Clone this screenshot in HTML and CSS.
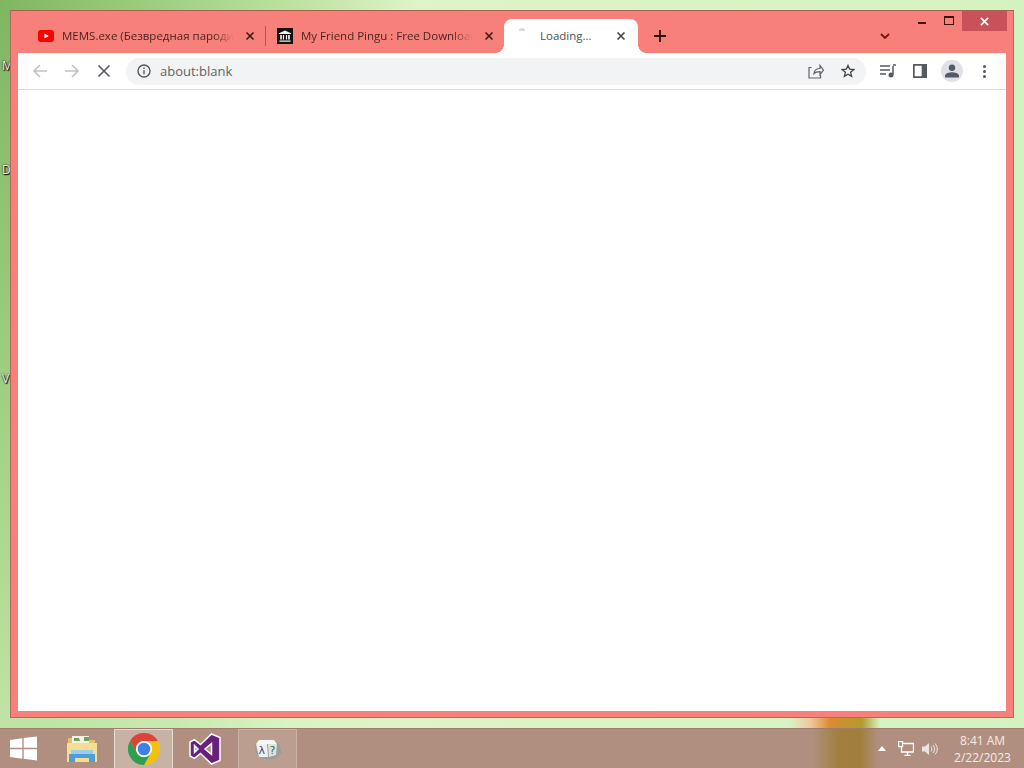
FILE: index.html
```html
<!DOCTYPE html>
<html lang="en">
<head>
    <meta charset="UTF-8">
    <meta name="viewport" content="width=device-width, initial-scale=1.0">
    <title>about:blank</title>
    <link rel="stylesheet" href="styles.css">
</head>
<body>
    <div class="desktop">
        <span class="desk-label label-m">M</span>
        <span class="desk-label label-d">D</span>
        <span class="desk-label label-v">V</span>

        <div class="window">
            <div class="caption">
                <div class="tab tab-first">
                    <svg class="favicon" viewBox="0 0 16 12"><rect width="16" height="12" rx="3" fill="#f00"/><path d="M6.4 3.4 10.8 6 6.4 8.6z" fill="#fff"/></svg>
                    <span class="tab-title">MEMS.exe (Безвредная пародия</span>
                    <svg class="tab-close" viewBox="0 0 10 10"><path d="M1.5 1.5l7 7M8.5 1.5l-7 7"/></svg>
                </div>
                <div class="tab-sep"></div>
                <div class="tab tab-second">
                    <svg class="favicon favicon-square" viewBox="0 0 16 16"><rect width="16" height="16" fill="#111"/><path d="M8 2.500 14 5.200v.9H2v-.9zM3.200 7h1.700v4.600H3.200zM5.900 7h1.200v4.600H5.900zM8.900 7h1.200v4.600H8.900zM11.100 7h1.700v4.600h-1.700zM2.400 12.400h11.200v1.300H2.400z" fill="#f4f4f4"/></svg>
                    <span class="tab-title">My Friend Pingu : Free Download</span>
                    <svg class="tab-close" viewBox="0 0 10 10"><path d="M1.5 1.5l7 7M8.5 1.5l-7 7"/></svg>
                </div>
                <div class="tab tab-active">
                    <span class="spinner"></span>
                    <span class="tab-title">Loading...</span>
                    <svg class="tab-close" viewBox="0 0 10 10"><path d="M1.5 1.5l7 7M8.5 1.5l-7 7"/></svg>
                </div>
                <svg class="new-tab" viewBox="0 0 12 12"><path d="M6 0v12M0 6h12"/></svg>
                <svg class="tab-search" viewBox="0 0 10 6"><path d="M1 1l4 4 4-4"/></svg>
                <div class="win-controls">
                    <div class="win-btn"><span class="win-min"></span></div>
                    <div class="win-btn"><span class="win-max"></span></div>
                    <div class="win-close"><svg viewBox="0 0 10 10"><path d="M1 1l8 8M9 1l-8 8"/></svg></div>
                </div>
            </div>

            <div class="toolbar">
                <svg class="nav-icon nav-off" viewBox="0 0 16 16"><path d="M15 8H2M8 2 2 8l6 6"/></svg>
                <svg class="nav-icon nav-off" viewBox="0 0 16 16"><path d="M1 8h13M8 2l6 6-6 6"/></svg>
                <svg class="nav-icon nav-stop" viewBox="0 0 16 16"><path d="M2.5 2.5l11 11M13.5 2.5l-11 11"/></svg>
                <div class="omnibox">
                    <svg class="info-icon" viewBox="0 0 14 14"><circle cx="7" cy="7" r="6"/><path d="M7 6.200v4M7 3.400v1.500"/></svg>
                    <span class="url">about:blank</span>
                    <svg class="omni-icon omni-share" viewBox="0 0 16 16"><path d="M3.500 4.500H1v10.500h11.500v-3M6 10.500c.4-3.300 3-5 6-5V2.500l3.500 4.700-3.500 4.300V8.600c-2.600 0-4.600.4-6 1.900z"/></svg>
                    <svg class="omni-icon omni-star" viewBox="0 0 16 16"><path d="M8 1.600l1.900 4.400 4.700.4-3.600 3.100 1.100 4.700L8 11.700l-4.100 2.500L5 9.500 1.400 6.400l4.700-.4z"/></svg>
                </div>
                <svg class="tool-icon tool-media" viewBox="0 0 16 14"><path d="M0 2h10M0 6h10M0 10h6" class="media-lines"/><path d="M13 2v8.500" class="media-lines"/><path d="M13 1h3" class="media-lines"/><circle cx="11" cy="11" r="2.500"/></svg>
                <svg class="tool-icon tool-panel" viewBox="0 0 14 14"><path fill-rule="evenodd" d="M0 0h14v14H0zM1.700 1.700v10.600h7V1.700z"/></svg>
                <div class="avatar">
                    <svg viewBox="0 0 14 14"><circle cx="7" cy="3.800" r="3.200"/><path d="M0 13.500v-1.700c0-2.400 4.500-3.500 7-3.500s7 1.100 7 3.500v1.700z"/></svg>
                </div>
                <div class="menu-dots"><span></span><span></span><span></span></div>
            </div>

            <div class="page"></div>
        </div>
    </div>

    <div class="taskbar">
        <svg class="start-icon" viewBox="0 0 28 25"><path d="M0 3.600 12.800 1.800v10H0zM14.200 1.600 28 0v11.800H14.200zM0 13.200h12.800v10L0 21.400zM14.200 13.200H28V25l-13.800-1.800z"/></svg>

        <div class="task task-explorer">
            <svg viewBox="0 0 32 32">
                <path d="M2 5h10l2 2h15v10H2z" fill="#e2c26a"/>
                <path d="M6 3h17v8H6z" fill="#f5f1e0"/>
                <path d="M8 5h5l1 3H8zM18 4h5v4h-5z" fill="#6f9f62"/>
                <path d="M1 10h30v19H1z" fill="#f5dd92"/>
                <path d="M3 21h26v8h-6v-4H9v4H3z" fill="#4c9fd8"/>
                <path d="M5 17h22v4H5z" fill="#9ccdec"/>
            </svg>
        </div>
        <div class="task task-active">
            <svg viewBox="0 0 32 32">
                <path d="M2.140 8A16 16 0 0 1 29.860 8H16A8 8 0 0 0 9.070 20z" fill="#db4437"/>
                <path d="M29.860 8A16 16 0 0 1 16 32L22.930 20A8 8 0 0 0 16 8z" fill="#f4c20d"/>
                <path d="M16 32A16 16 0 0 1 2.140 8L9.070 20A8 8 0 0 0 22.930 20z" fill="#2f9e4f"/>
                <circle cx="16" cy="16" r="8" fill="#fff"/>
                <circle cx="16" cy="16" r="6.300" fill="#3f7fe8"/>
            </svg>
        </div>
        <div class="task task-vs">
            <svg viewBox="0 0 32 32"><path d="M22.500 1 31 4.500v23L22.500 31 11.500 20.500l-6 4.800L1 23V9l4.500-2.300 6 4.800zM22.500 10.500 16 16l6.500 5.500zM5.500 12.500v7L9 16z" fill="#68217a" stroke="#fff" stroke-width="1.500"/></svg>
        </div>
        <div class="task task-open">
            <svg class="lambda-cube" viewBox="0 0 30 22">
                <path d="M2 6 9 2h12l5 4 3 9-7 6H8l-5-5z" fill="#9b9d9b"/>
                <path d="M3 6h11l1 13H6z" fill="#eef0f0"/>
                <path d="M15 6h9l-1 11-7 2z" fill="#dfe3df"/>
                <path d="M6 2h15l3 4H3z" fill="#f7f7f5"/>
                <text x="5.500" y="16" class="cube-lambda">λ</text>
                <text x="16.500" y="15.500" class="cube-q">?</text>
            </svg>
        </div>

        <div class="tray">
            <svg class="tray-up" viewBox="0 0 8 5"><path d="M0 5 4 0l4 5z"/></svg>
            <svg class="tray-net" viewBox="0 0 16 15"><path d="M5 2.500h10.500v8.500H3.500V6M9.500 11v3M6.500 14.500h6"/><rect x="0.500" y="0.500" width="4" height="5"/></svg>
            <svg class="tray-vol" viewBox="0 0 16 14"><path class="vol-cone" d="M0 4.500h3L7 1v12L3 9.500H0z"/><path d="M9 4.500c1 1.500 1 3.500 0 5M11 3c2 2.500 2 5.500 0 8M13 1.500c3 3.500 3 7.500 0 11"/></svg>
            <div class="clock">
                <span>8:41 AM</span>
                <span>2/22/2023</span>
            </div>
        </div>
    </div>
</body>
</html>
```

FILE: styles.css
```css
html, body {
    height: 100%;
}
body {
    margin: 0;
    font-family: "Open Sans", "Liberation Sans", sans-serif;
    display: flex;
    flex-direction: column;
    overflow: hidden;
    background: #c9ecb3;
}
svg {
    display: block;
    flex: none;
}

/* desktop */
.desktop {
    position: relative;
    flex: 1;
    background:
        linear-gradient(90deg, rgba(240,201,160,0) 790px, #f0c9a0 810px, #d98c30 830px, #b39a2e 862px, rgba(179,154,46,0) 880px) 0 100% / 100% 10px no-repeat,
        radial-gradient(ellipse 420px 1000px at 0 0, #7fb662 0, #a9d68b 50%, #c8e8ae 80%, rgba(200,232,174,0) 100%),
        linear-gradient(90deg, #d2efbc, #dff4c8 40%, #d4f2c0);
}
.desk-label {
    position: absolute;
    left: 2px;
    font-size: 12px;
    line-height: 14px;
    color: #eee;
    text-shadow: 0 0 2px #000, 1px 1px 1px #000;
}
.label-m { top: 59px; }
.label-d { top: 163px; }
.label-v { top: 372px; }

/* chrome window */
.window {
    position: absolute;
    left: 10px;
    top: 10px;
    width: 1004px;
    height: 708px;
    box-sizing: border-box;
    border: 1px solid #b3695c;
    border-top-color: #a8604f;
    background: #f8807a;
    padding: 0 7px 6px 7px;
    display: flex;
    flex-direction: column;
}
.caption {
    position: relative;
    height: 42px;
    flex: none;
    display: flex;
    align-items: flex-end;
}
.tab {
    height: 34px;
    box-sizing: border-box;
    padding-right: 8px;
    display: flex;
    align-items: center;
    gap: 8px;
    font-size: 11.5px;
    color: #4a2320;
}
.tab-first {
    width: 245px;
    padding-left: 20px;
}
.tab-second {
    width: 236px;
    padding-left: 11px;
}
.tab-sep {
    width: 1px;
    height: 20px;
    margin: 0 0 7px 2px;
    background: #a85d54;
}
.favicon {
    width: 16px;
    height: 12px;
}
.favicon-square {
    height: 16px;
}
.tab-title {
    flex: 1;
    min-width: 0;
    line-height: 16px;
    margin-bottom: 1px;
    white-space: nowrap;
    overflow: hidden;
    -webkit-mask-image: linear-gradient(90deg, #000 88%, transparent 100%);
    mask-image: linear-gradient(90deg, #000 88%, transparent 100%);
}
.tab-close {
    width: 10px;
    height: 10px;
    margin-left: 3px;
    fill: none;
    stroke: #3a1a18;
    stroke-width: 1.600;
}
.tab-active {
    position: relative;
    width: 134px;
    margin-left: 2px;
    padding: 0 12px 0 36px;
    background: #fff;
    border-radius: 8px 8px 0 0;
    color: #50504f;
}
.tab-active::before,
.tab-active::after {
    content: "";
    position: absolute;
    bottom: 0;
    width: 8px;
    height: 8px;
}
.tab-active::before {
    left: -8px;
    background: radial-gradient(circle at 0 0, transparent 7.500px, #fff 8px);
}
.tab-active::after {
    right: -8px;
    background: radial-gradient(circle at 100% 0, transparent 7.500px, #fff 8px);
}
.tab-active .tab-title {
    -webkit-mask-image: none;
    mask-image: none;
}
.tab-active .tab-close {
    stroke: #444;
}
.spinner {
    position: absolute;
    left: 15px;
    top: 9px;
    width: 6px;
    height: 3px;
    background: #d8d8d8;
    border-radius: 3px 3px 0 0;
}
.new-tab {
    width: 12px;
    height: 12px;
    margin: 0 0 11px 16px;
    fill: none;
    stroke: #2e1312;
    stroke-width: 1.800;
}
.tab-search {
    width: 10px;
    height: 6px;
    margin: 0 0 14px 214px;
    fill: none;
    stroke: #6d1715;
    stroke-width: 1.800;
}
.win-controls {
    position: absolute;
    right: -1px;
    top: 0;
    display: flex;
}
.win-btn {
    width: 27px;
    height: 20px;
    display: flex;
    align-items: center;
    justify-content: center;
}
.win-min {
    width: 8px;
    height: 2px;
    margin-top: 4px;
    background: #3a1210;
}
.win-max {
    width: 8px;
    height: 6px;
    border: 1px solid #3a1210;
    border-top-width: 2px;
    margin-top: -2px;
}
.win-close {
    width: 45px;
    height: 20px;
    background: #c9525a;
    display: flex;
    align-items: center;
    justify-content: center;
}
.win-close svg {
    width: 9px;
    height: 9px;
    fill: none;
    stroke: #fff;
    stroke-width: 1.700;
}

/* toolbar */
.toolbar {
    height: 37px;
    flex: none;
    box-sizing: border-box;
    background: #fff;
    border-bottom: 1px solid #dadce0;
    display: flex;
    align-items: center;
    padding-left: 14px;
}
.nav-icon {
    width: 16px;
    height: 16px;
    margin-right: 16px;
    fill: none;
    stroke-width: 1.600;
}
.nav-off {
    stroke: #bfc1c4;
}
.nav-stop {
    stroke: #55585c;
    margin-right: 15px;
}
.omnibox {
    width: 740px;
    height: 27px;
    margin-left: -1px;
    box-sizing: border-box;
    padding: 0 10px 0 11px;
    background: #f1f3f4;
    border-radius: 14px;
    display: flex;
    align-items: center;
}
.info-icon {
    width: 14px;
    height: 14px;
    fill: none;
    stroke: #55585c;
    stroke-width: 1.400;
}
.url {
    flex: 1;
    margin-left: 9px;
    font-size: 13px;
    color: #5f6368;
}
.omni-icon {
    width: 16px;
    height: 16px;
    fill: none;
    stroke: #5f6368;
    stroke-width: 1.200;
}
.omni-star {
    width: 14px;
    height: 14px;
    margin: 0 1px 0 17px;
    stroke: #444;
    stroke-width: 1.500;
}
.tool-icon {
    fill: #55585c;
}
.tool-media {
    width: 16px;
    height: 14px;
    margin-left: 14px;
}
.media-lines {
    fill: none;
    stroke: #55585c;
    stroke-width: 1.500;
}
.tool-panel {
    width: 14px;
    height: 14px;
    margin-left: 17px;
}
.avatar {
    width: 22px;
    height: 22px;
    margin-left: 14px;
    border-radius: 50%;
    background: #dfe1e6;
    display: flex;
    align-items: center;
    justify-content: center;
}
.avatar svg {
    width: 14px;
    height: 14px;
    fill: #525b6b;
}
.menu-dots {
    margin-left: 20px;
    display: flex;
    flex-direction: column;
    gap: 2px;
}
.menu-dots span {
    width: 3px;
    height: 3px;
    border-radius: 50%;
    background: #55585c;
}
.page {
    flex: 1;
    background: #fff;
}

/* taskbar */
.taskbar {
    height: 40px;
    flex: none;
    display: flex;
    background:
        linear-gradient(90deg, rgba(160,128,63,0) 812px, #a0803f 838px, #a07e3a 860px, rgba(160,126,58,0) 878px),
        #b18f80;
    border-top: 1px solid #9c7c6c;
    box-sizing: border-box;
    align-items: stretch;
}
.start-icon {
    width: 27px;
    height: 25px;
    margin: 7px 0 0 10px;
    fill: #fff;
}
.task {
    width: 59px;
    box-sizing: border-box;
    display: flex;
    align-items: center;
    justify-content: center;
}
.task svg {
    width: 32px;
    height: 32px;
}
.task-explorer {
    margin-left: 15px;
}
.task-active {
    margin-left: 3px;
    background: #c7b3a5;
    border: 1px solid #e6dbd0;
    border-bottom: 0;
}
.task-vs {
    margin-left: 2px;
}
.task-open {
    margin-left: 4px;
    background: #bb9e90;
    border: 1px solid #c9b3a7;
    border-bottom: 0;
}
.task .lambda-cube {
    width: 30px;
    height: 22px;
}
.cube-lambda,
.cube-q {
    font-family: "DejaVu Sans", sans-serif;
    font-size: 11px;
}
.cube-lambda {
    fill: #2b4f7a;
}
.cube-q {
    fill: #2f6a55;
}
.tray {
    margin-left: auto;
    display: flex;
    align-items: center;
    padding-right: 14px;
}
.tray-up {
    width: 8px;
    height: 5px;
    fill: #fff;
}
.tray-net {
    width: 16px;
    height: 15px;
    margin-left: 12px;
    fill: none;
    stroke: #fff;
    stroke-width: 1.300;
}
.tray-vol {
    width: 16px;
    height: 14px;
    margin-left: 8px;
    fill: none;
    stroke: #f0ebe6;
}
.vol-cone {
    fill: #e8e4df;
    stroke: none;
}
.clock {
    width: 55px;
    margin: 2px 0 0 17px;
    display: flex;
    flex-direction: column;
    align-items: center;
    gap: 1px;
    font-size: 12px;
    line-height: 16px;
    color: #f4ece6;
}
```
